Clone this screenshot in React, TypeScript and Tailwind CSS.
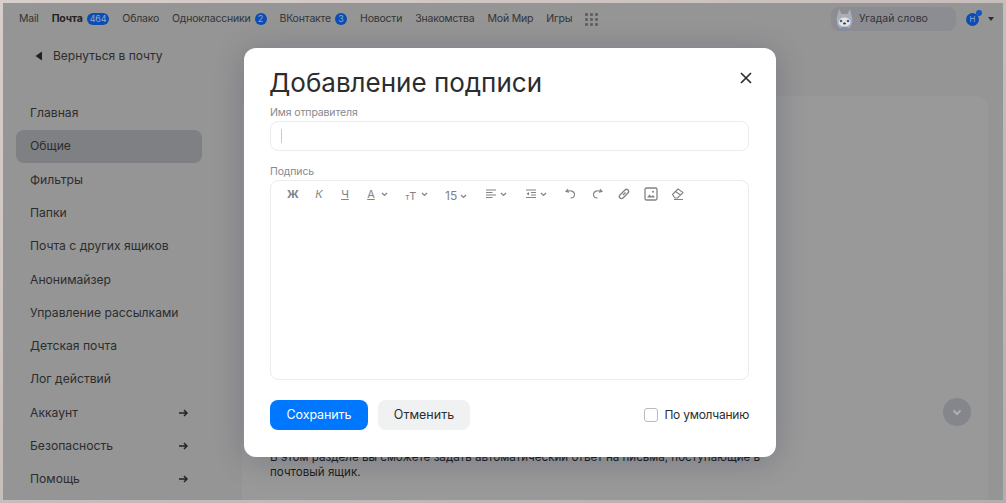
import React from "react";

const top: [string, string?, boolean?][] = [
  ["Mail"],
  ["Почта", "464", true],
  ["Облако"],
  ["Одноклассники", "2"],
  ["ВКонтакте", "3"],
  ["Новости"],
  ["Знакомства"],
  ["Мой Мир"],
  ["Игры"],
];

const nav: [string, boolean?, boolean?][] = [
  ["Главная"],
  ["Общие", false, true],
  ["Фильтры"],
  ["Папки"],
  ["Почта с других ящиков"],
  ["Анонимайзер"],
  ["Управление рассылками"],
  ["Детская почта"],
  ["Лог действий"],
  ["Аккаунт", true],
  ["Безопасность", true],
  ["Помощь", true],
];

const Chev = () => (
  <svg width="7" height="5" viewBox="0 0 7 5" fill="none" stroke="#808286" strokeWidth="1.2" className="ml-[3px]">
    <path d="M1 1l2.5 2.5L6 1" />
  </svg>
);

const Ic = ({ children, w = 14 }: { children: React.ReactNode; w?: number }) => (
  <svg width={w} height="14" viewBox={`0 0 ${w} 14`} fill="none" stroke="#808286" strokeWidth="1.1">
    {children}
  </svg>
);

function Toolbar() {
  return (
    <div className="flex items-center h-[26px] pl-[15px] text-[#808286] [font-family:'Liberation_Sans',sans-serif]">
      <div className="w-[14px] flex justify-center text-[11px] font-bold">Ж</div>
      <div className="w-[14px] ml-[12px] flex justify-center text-[11px] italic">К</div>
      <div className="w-[14px] ml-[12px] flex justify-center text-[11px] underline">Ч</div>
      <div className="ml-[12px] flex items-center w-[24px]">
        <span className="text-[11px] underline w-[14px] text-center">А</span>
        <Chev />
      </div>
      <div className="ml-[16px] flex items-center w-[25px]">
        <span className="w-[14px] text-center leading-none">
          <span className="text-[8px]">т</span>
          <span className="text-[11px]">Т</span>
        </span>
        <Chev />
      </div>
      <div className="ml-[16px] flex items-center w-[24px] pt-[4px]">
        <span className="text-[12px]">15</span>
        <Chev />
      </div>
      <div className="ml-[16px] flex items-center w-[24px]">
        <Ic w={12}>
          <path d="M1 3h10M1 5.500h6.500M1 8h10M1 10.500h6.500" />
        </Ic>
        <Chev />
      </div>
      <div className="ml-[16px] flex items-center w-[24px]">
        <Ic w={12}>
          <path d="M1 3h10M6 5.500h5M6 8h5M1 10.500h10" />
          <path d="M4 5L1.500 6.800 4 8.600z" fill="#808286" stroke="none" />
        </Ic>
        <Chev />
      </div>
      <div className="ml-[15px] w-[14px]">
        <Ic>
          <path d="M4 2L2 4.500l3 .8M2.300 4.500C6 3 10.500 4 10.500 7.500c0 2.400-2 3.500-4 3.500" />
        </Ic>
      </div>
      <div className="ml-[12px] w-[14px]">
        <Ic>
          <path d="M10 2l2 2.500-3 .8M11.700 4.500C8 3 3.500 4 3.500 7.500c0 2.400 2 3.500 4 3.500" />
        </Ic>
      </div>
      <div className="ml-[13px] w-[14px]">
        <Ic>
          <path d="M6 8l2.500-2.500M5.500 5.500L3 8a2 2 0 0 0 3 3l2.500-2.500M8.500 8.500L11 6a2 2 0 0 0-3-3L5.500 5.500" strokeWidth="1.300" />
        </Ic>
      </div>
      <div className="ml-[13px] w-[14px]">
        <Ic>
          <rect x="1" y="1" width="12" height="12" rx="1.500" strokeWidth="1.300" />
          <path d="M3 10.500l2.500-3 2 2 1.500-1.500 2 2.500z" fill="#808286" stroke="none" />
          <circle cx="9" cy="4.800" r="1" fill="#808286" stroke="none" />
        </Ic>
      </div>
      <div className="ml-[13px] w-[14px]">
        <Ic>
          <path d="M1.500 7.500L7 2l5 3.500-5.500 5.500H4zM4.500 4.500L9.500 8M3 12.500h9" />
        </Ic>
      </div>
    </div>
  );
}

export default function App() {
  return (
    <div className="relative w-[1006px] h-[503px] overflow-hidden bg-linear-to-br from-[#d8cfcc] to-[#b5adab] p-[3px] [font-family:Inter,sans-serif]">
      <div className="w-[1000px] h-[497px] bg-[#959595] flex flex-col text-[#2c2d2e] overflow-hidden">
        <header className="h-[30px] pt-[2px] flex items-center pl-[16px] pr-[9px] text-[10.500px] [font-family:'Liberation_Sans',sans-serif] shrink-0">
          <div className="flex items-center gap-[13px] text-[#333436] tracking-[-0.2px]">
            {top.map(([t, b, bold]) => (
              <span key={t} className="flex items-center">
                <span className={bold ? "font-bold text-[#232324]" : ""}>{t}</span>
                {b && (
                  <span className="ml-[4px] h-[12px] min-w-[12px] px-[3px] rounded-full bg-[#0d4cb0] text-[#8fa9d6] text-[9px] leading-[12px] text-center">
                    {b}
                  </span>
                )}
              </span>
            ))}
            <div className="grid grid-cols-3 gap-[2px]">
              {Array.from({ length: 9 }).map((_, i) => (
                <span key={i} className="w-[3px] h-[3px] bg-[#606163] rounded-[1px]" />
              ))}
            </div>
          </div>
          <div className="ml-auto flex items-center w-[125px] h-[24px] rounded-[8px] bg-[#8b8d92] pl-[4px]">
            <svg width="19" height="22" viewBox="0 0 19 22">
              <path d="M4 1l2.500 5h6L15 1l2.500 10-1 6-3 4h-8l-3-4-1-6z" fill="#acaeb3" />
              <ellipse cx="9.500" cy="14" rx="6" ry="4.500" fill="#e4e4e4" />
              <circle cx="6" cy="13" r="1.300" fill="#3464ad" />
              <circle cx="13" cy="13" r="1.300" fill="#3464ad" />
              <ellipse cx="9.500" cy="15.500" rx="1.500" ry="1" fill="#333" />
              <path d="M3 21q6.500-4 13 0z" fill="#7b8fb0" />
            </svg>
            <span className="ml-[5px] text-[#333436]">Угадай слово</span>
          </div>
          <div className="relative ml-[10px] w-[13px] h-[13px] rounded-full bg-[#0d4cb0] text-[#8fa9d6] text-[8px] leading-[13px] text-center">
            Н
            <span className="absolute -top-[3px] -right-[3px] w-[6px] h-[6px] rounded-full bg-[#0d56c4]" />
          </div>
          <svg width="6" height="4" viewBox="0 0 6 4" className="ml-[9px]">
            <path d="M0 0h6L3 4z" fill="#2c2d2e" />
          </svg>
        </header>

        <div className="flex-1 flex min-h-0">
          <aside className="w-[239px] shrink-0 flex flex-col pl-[13px]">
            <div className="flex items-center h-[20px] mt-[13px] pl-[19px] text-[#2c2d2e] text-[12px]">
              <svg width="8" height="10" viewBox="0 0 8 10" className="mr-[10px]">
                <path d="M7 0.500v9L0.500 5z" fill="#1f2021" />
              </svg>
              Вернуться в почту
            </div>
            <nav className="mt-[30.500px] flex flex-col text-[12.150px]">
              {nav.map(([t, arrow, active]) => (
                <div
                  key={t}
                  className={`h-[33.3px] w-[186px] flex items-center pl-[14px] pr-[14px] rounded-[8px] whitespace-nowrap ${
                    active ? "bg-[#7f8083]" : ""
                  }`}
                >
                  <span className="flex-1">{t}</span>
                  {arrow && (
                    <svg width="9" height="8" viewBox="0 0 9 8" fill="none" stroke="#232324" strokeWidth="1.500">
                      <path d="M0 4h7.500M5 1l3 3-3 3" />
                    </svg>
                  )}
                </div>
              ))}
            </nav>
          </aside>
          <main className="flex-1 mt-[63px] mr-[15px] rounded-t-[12px] bg-[#999999] relative pl-[28px] pt-[354px] text-[#1e1f20]">
            <p className="w-[496px] text-[11.600px] leading-[15px] [font-family:'Liberation_Sans',sans-serif]">
              В этом разделе вы сможете задать автоматический ответ на письма, поступающие в почтовый ящик.
            </p>
            <div className="absolute left-[701px] top-[302px] w-[28px] h-[28px] rounded-full bg-[#84868b] flex items-center justify-center">
              <svg width="10" height="7" viewBox="0 0 10 7" fill="none" stroke="#aeb0b3" strokeWidth="2">
                <path d="M1.500 1.500L5 5l3.500-3.500" />
              </svg>
            </div>
          </main>
        </div>
      </div>

      {/* modal */}
      <div className="absolute left-[244px] top-[48px] w-[532px] h-[409px] rounded-[12px] bg-white pl-[26px] pr-[27px] shadow-[0_4px_32px_rgba(0,16,61,0.2)] flex flex-col [font-family:'Liberation_Sans',sans-serif]">
        <button className="absolute right-[24px] top-[24px] w-[12px] h-[12px]">
          <svg width="12" height="12" viewBox="0 0 12 12" stroke="#2c2d2e" strokeWidth="1.700" fill="none">
            <path d="M1 1l10 10M11 1L1 11" />
          </svg>
        </button>
        <h1 className="mt-[17px] -ml-[1px] text-[26px] leading-[36px] font-normal text-[#2c2d2e] [font-family:Inter,sans-serif] whitespace-nowrap">
          Добавление подписи
        </h1>
        <label className="mt-[4px] text-[10.500px] leading-[16px] tracking-[-0.13px] text-[#87898f]">Имя отправителя</label>
        <div className="h-[30px] rounded-[8px] border border-[#ececee] flex items-center pl-[10px]">
          <span className="w-px h-[14px] bg-[#c9cacc]" />
        </div>
        <label className="mt-[13px] text-[10.500px] leading-[16px] tracking-[-0.13px] text-[#87898f]">Подпись</label>
        <div className="h-[200px] rounded-[8px] border border-[#ececee]">
          <Toolbar />
        </div>
        <div className="mt-[20px] flex items-center text-[12.500px]">
          <button className="w-[98px] h-[30px] rounded-[8px] bg-[#0077ff] text-white tracking-[-0.1px]">Сохранить</button>
          <button className="ml-[10px] w-[92px] h-[30px] rounded-[8px] bg-[#f0f1f3] text-[#2c2d2e]">Отменить</button>
          <span className="ml-auto w-[14px] h-[14px] rounded-[3px] border border-[#b9babd] bg-white" />
          <span className="ml-[6px] text-[#2c2d2e] text-[12px] tracking-[-0.25px]">По умолчанию</span>
        </div>
      </div>
    </div>
  );
}
